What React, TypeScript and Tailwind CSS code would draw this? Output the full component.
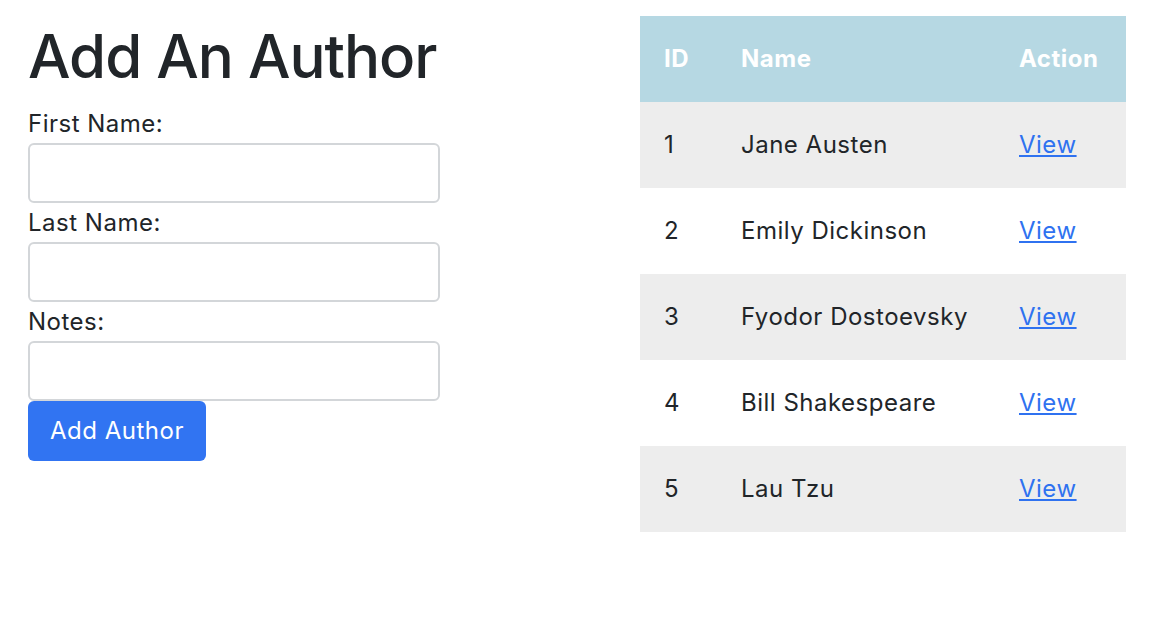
const authors = [
  { id: 1, name: "Jane Austen" },
  { id: 2, name: "Emily Dickinson" },
  { id: 3, name: "Fyodor Dostoevsky" },
  { id: 4, name: "Bill Shakespeare" },
  { id: 5, name: "Lau Tzu" },
];

function Field({ label }: { label: string }) {
  return (
    <div className="flex flex-col">
      <label className="h-[39px] text-[24px] leading-[39px] tracking-[0.5px]">{label}</label>
      <input
        type="text"
        className="h-[60px] w-[412px] rounded-[6px] border-2 border-[#d3d6d9] bg-white px-3 outline-none"
      />
    </div>
  );
}

export default function App() {
  return (
    <div className="flex min-h-[640px] w-[1152px] bg-white font-['Inter',sans-serif] text-[#212529]">
      <div className="w-[640px] pl-[28px] pt-[20px]">
        <h1 className="mb-[12px] text-[60px] font-medium leading-[72px] tracking-[-1px]">Add An Author</h1>
        <form className="flex flex-col" onSubmit={(e) => e.preventDefault()}>
          <Field label="First Name:" />
          <Field label="Last Name:" />
          <Field label="Notes:" />
          <div>
            <button
              type="submit"
              className="h-[60px] w-[178px] rounded-[6px] bg-[#3174f2] text-[24px] tracking-[0.5px] text-white"
            >
              Add Author
            </button>
          </div>
        </form>
      </div>

      <div className="pt-[16px]">
        <table className="w-[486px] border-collapse text-left text-[24px] tracking-[0.5px]">
          <thead>
            <tr className="h-[86px] bg-[#b6d8e3] text-white">
              <th className="w-[77px] pl-[24px] font-bold">ID</th>
              <th className="w-[278px] pl-[24px] font-bold">Name</th>
              <th className="pl-[24px] font-bold">Action</th>
            </tr>
          </thead>
          <tbody>
            {authors.map((a, i) => (
              <tr key={a.id} className={`h-[86px] ${i % 2 === 0 ? "bg-[#ededed]" : "bg-white"}`}>
                <td className="pl-[24px]">{a.id}</td>
                <td className="pl-[24px]">{a.name}</td>
                <td className="pl-[24px]">
                  <a href="#" className="text-[#2f72f0] underline">
                    View
                  </a>
                </td>
              </tr>
            ))}
          </tbody>
        </table>
      </div>
    </div>
  );
}
